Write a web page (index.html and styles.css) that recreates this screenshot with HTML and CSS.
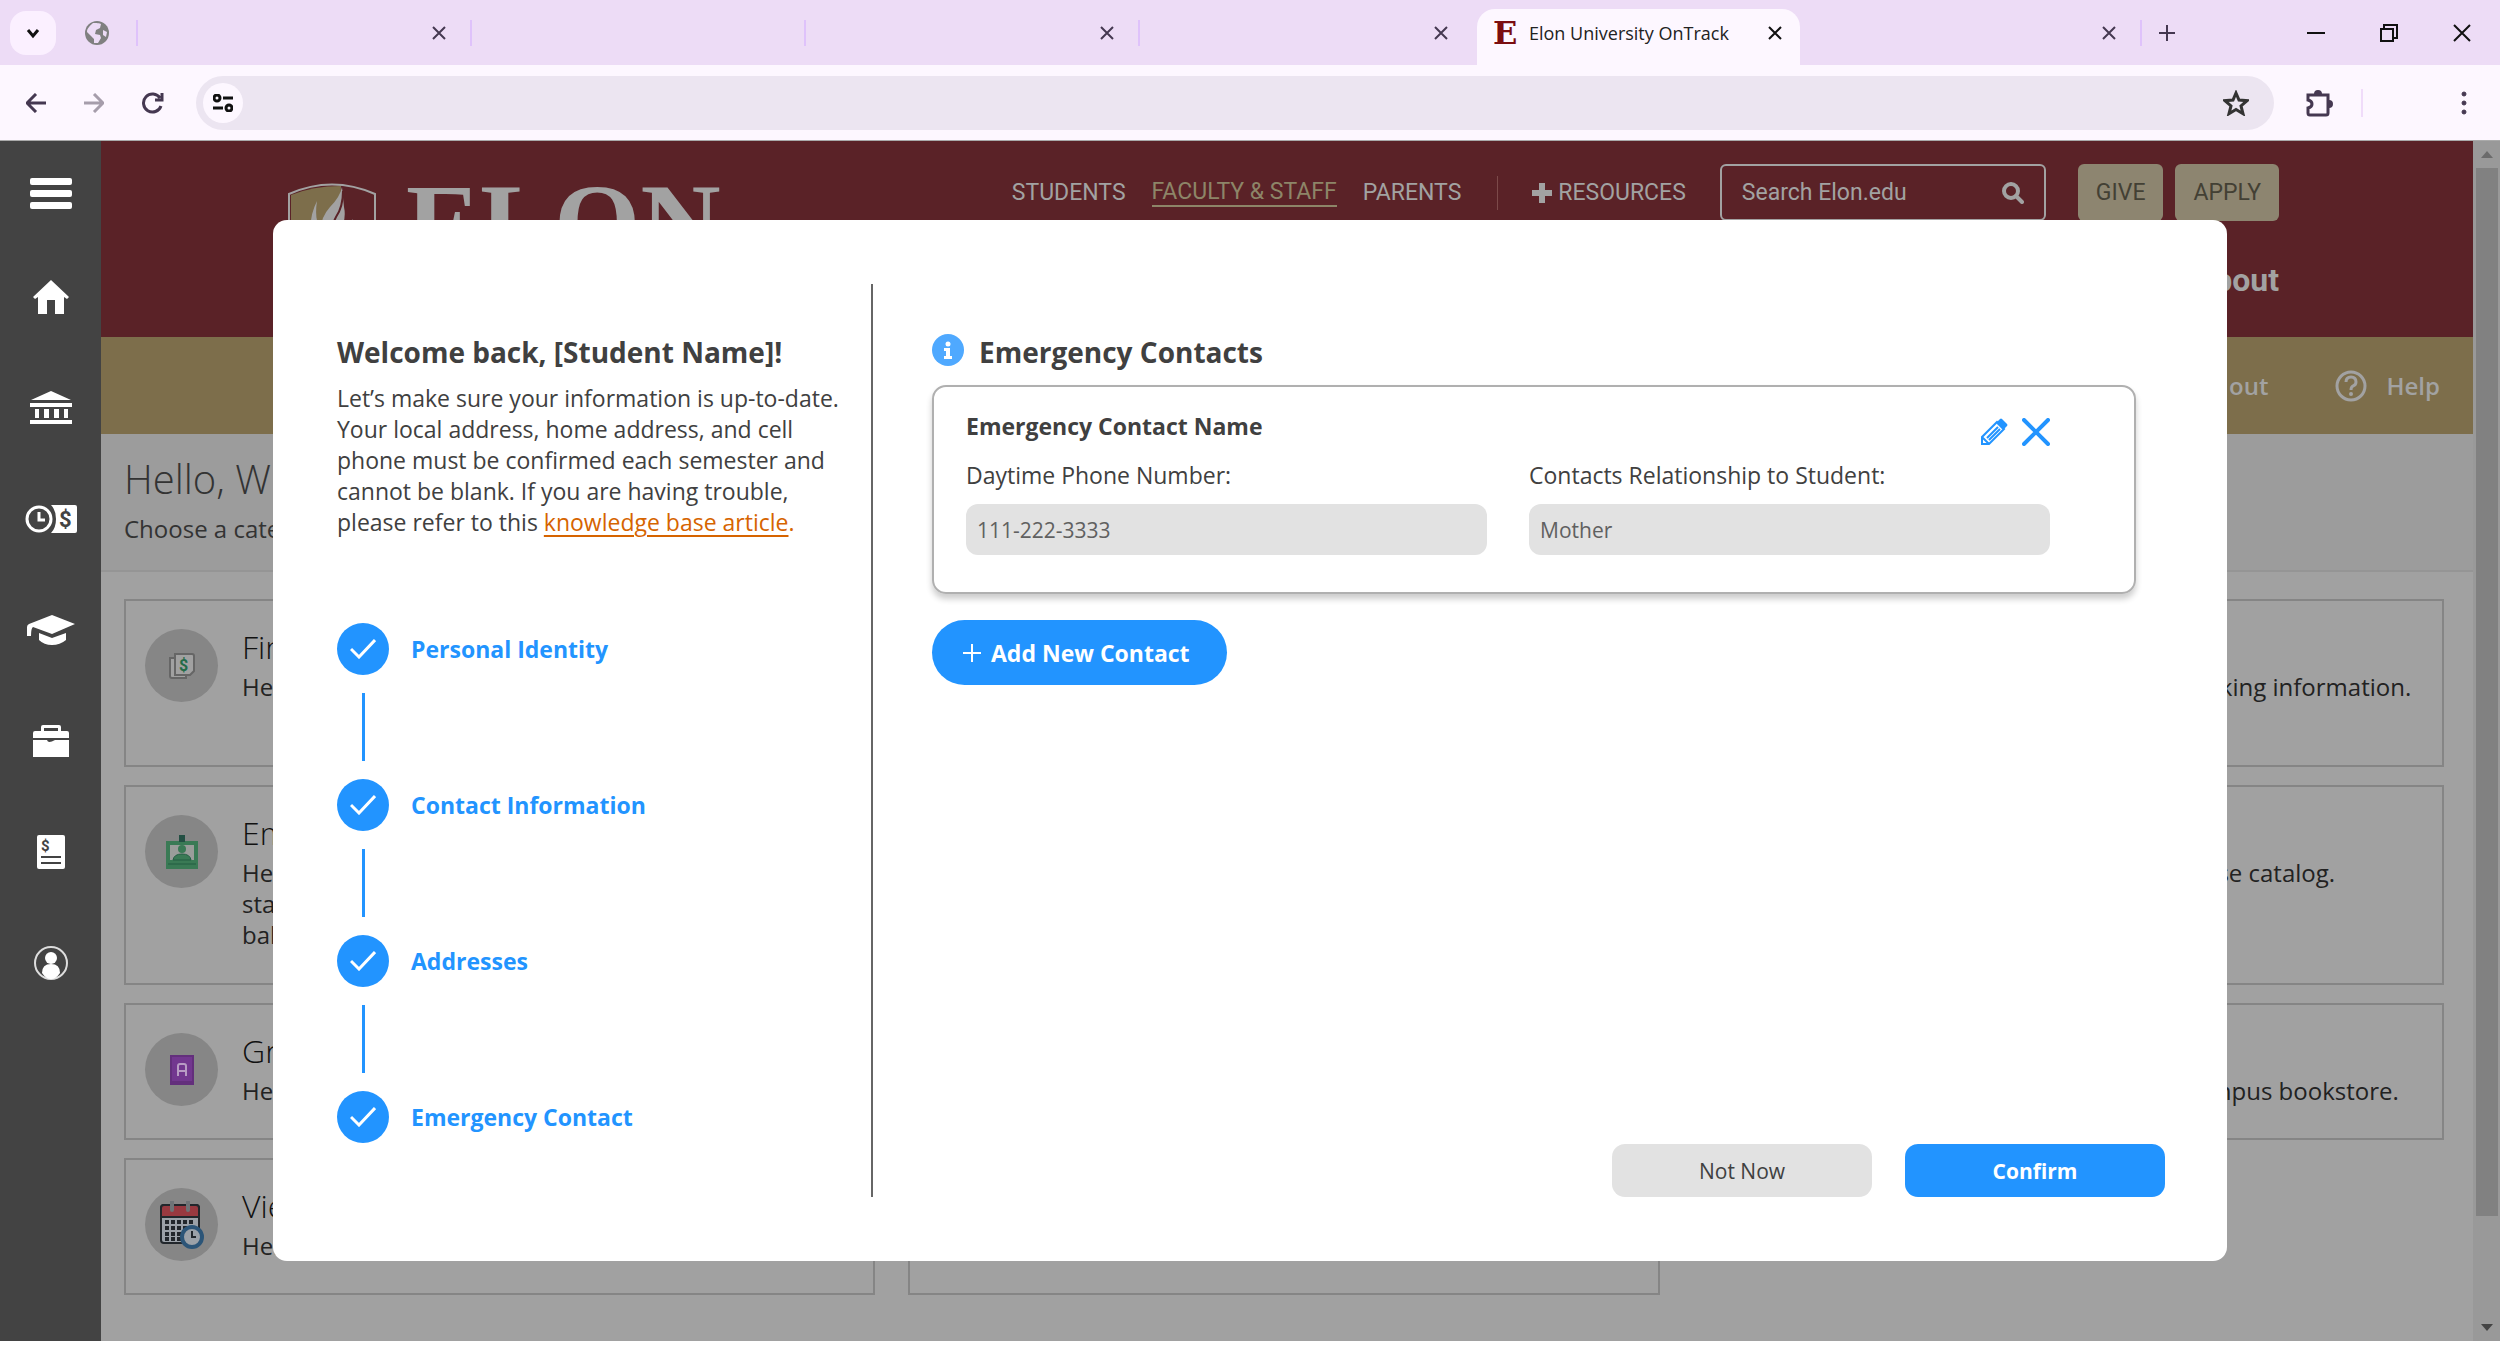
FILE: index.html
```html
<!DOCTYPE html>
<html lang="en">
<head>
    <meta charset="UTF-8">
    <meta name="viewport" content="width=device-width, initial-scale=1.0">
    <title>Elon University OnTrack</title>
    <link rel="stylesheet" href="styles.css">
</head>
<body>
    <!-- tab strip -->
    <div class="tabstrip">
        <div class="tabstrip-start">
            <button class="tab-search" aria-label="Search tabs"><svg width="16" height="16" viewBox="0 0 16 16"><path d="M3 5l5 6 5-6" fill="none" stroke="#111" stroke-width="3"/></svg></button>
            <svg width="24" height="24" viewBox="0 0 24 24"><circle cx="12" cy="12" r="12" fill="#808080"/><path d="M8 2c3 0 7 0 8 1l-1 4-4 2-1 4 5 1 1 3-3 5-4 0v-4l-3-3-4-4c0-4 3-6 6-9zM18 9l4 2-1 5-3-2z" fill="#eddcf6"/></svg>
        </div>
        <div class="tabs">
            <div class="tab"><button class="icon-btn" aria-label="Close tab"><svg width="14" height="14" viewBox="0 0 14 14"><path d="M1 1l12 12M13 1L1 13"/></svg></button></div>
            <div class="tab"></div>
            <div class="tab"><button class="icon-btn" aria-label="Close tab"><svg width="14" height="14" viewBox="0 0 14 14"><path d="M1 1l12 12M13 1L1 13"/></svg></button></div>
            <div class="tab"><button class="icon-btn" aria-label="Close tab"><svg width="14" height="14" viewBox="0 0 14 14"><path d="M1 1l12 12M13 1L1 13"/></svg></button></div>
            <div class="tab active">
                <span class="favicon">E</span>
                <span class="tab-title">Elon University OnTrack</span>
                <button class="icon-btn" aria-label="Close tab"><svg width="14" height="14" viewBox="0 0 14 14"><path d="M1 1l12 12M13 1L1 13"/></svg></button>
            </div>
            <div class="tab after-active"><button class="icon-btn" aria-label="Close tab"><svg width="14" height="14" viewBox="0 0 14 14"><path d="M1 1l12 12M13 1L1 13"/></svg></button></div>
        </div>
        <div class="tabstrip-end">
            <button class="icon-btn" aria-label="New tab"><svg width="18" height="18" viewBox="0 0 18 18"><path d="M9 1v16M1 9h16"/></svg></button>
            <div class="window-controls">
                <button class="icon-btn" aria-label="Minimize"><svg width="18" height="18" viewBox="0 0 18 18"><path d="M0 9h18"/></svg></button>
                <button class="icon-btn" aria-label="Restore"><svg width="18" height="18" viewBox="0 0 18 18"><path d="M1 5h12v12H1zM4 5V1h13v13h-4" /></svg></button>
                <button class="icon-btn" aria-label="Close window"><svg width="18" height="18" viewBox="0 0 18 18"><path d="M1 1l16 16M17 1L1 17"/></svg></button>
            </div>
        </div>
    </div>

    <!-- toolbar -->
    <div class="toolbar">
        <button class="icon-btn" aria-label="Back"><svg width="20" height="20" viewBox="0 0 20 20"><path d="M20 10H2M10 1l-9 9 9 9"/></svg></button>
        <button class="icon-btn faded" aria-label="Forward"><svg width="20" height="20" viewBox="0 0 20 20"><path d="M0 10h18M10 1l9 9-9 9"/></svg></button>
        <button class="icon-btn" aria-label="Reload"><svg width="22" height="22" viewBox="0 0 22 22"><path d="M19 14a9 9 0 1 1-1-8M20 1v7h-7"/></svg></button>
        <div class="address">
            <button class="site-info" aria-label="Site information"><svg width="20" height="18" viewBox="0 0 20 18"><circle cx="4" cy="4" r="3"/><path d="M10 4h10M0 14h10"/><circle cx="16" cy="14" r="3"/></svg></button>
            <input type="text" aria-label="Address">
            <button class="icon-btn" aria-label="Bookmark"><svg width="26" height="26" viewBox="0 0 26 26"><path d="M13 3l3 7 8 .7-6 5.300 2 7.700-7-4.200-7 4.200 2-7.700-6-5.300 8-.7z"/></svg></button>
        </div>
        <button class="icon-btn puzzle" aria-label="Extensions"><svg width="28" height="28" viewBox="0 0 28 28"><path d="M3 6h20v18q0 2-2 2H5q-2 0-2-2v-5q4-1 4-4t-4-4z"/><path d="M9 5a4 4 0 0 1 8 0zM24 11a4 4 0 0 1 0 8z" fill="#453851" stroke="none"/></svg></button>
        <button class="icon-btn dots" aria-label="Menu"><svg width="6" height="24" viewBox="0 0 6 24"><circle cx="3" cy="3" r="2"/><circle cx="3" cy="12" r="2"/><circle cx="3" cy="21" r="2"/></svg></button>
    </div>

    <div class="page">
        <nav class="sidebar" aria-label="Main">
            <a href="#" aria-label="Menu"><svg width="42" height="32" viewBox="0 0 42 32"><rect y="1" width="42" height="7" rx="2"/><rect y="13" width="42" height="7" rx="2"/><rect y="25" width="42" height="7" rx="2"/></svg></a>
            <a href="#" aria-label="Home"><svg width="36" height="34" viewBox="0 0 36 34"><path d="M18 0l18 17-2 2-3-2v17H22V20h-8v14H5V17l-3 2-2-2z"/></svg></a>
            <a href="#" aria-label="Finance"><svg width="42" height="34" viewBox="0 0 42 34"><path d="M21 0l20 9H1zM0 12h42v4H0zM5 18h4v9H5zM14 18h5v9h-5zM24 18h5v9h-5zM34 18h4v9h-4zM0 29h42v4H0z"/></svg></a>
            <a href="#" aria-label="Time and pay"><svg width="52" height="30" viewBox="0 0 52 30"><path d="M26 1h24q2 0 2 2v24q0 2-2 2H26q5-5 5-14T26 1z"/><circle cx="14" cy="15" r="12" fill="none" stroke="#fff" stroke-width="3"/><path d="M14 8v8h6" fill="none" stroke="#fff" stroke-width="3"/><text x="34" y="23" class="glyph" fill="#434343">$</text></svg></a>
            <a href="#" aria-label="Academics"><svg width="48" height="30" viewBox="0 0 48 30"><path d="M25 0l23 9-23 10L6 12q-2 1-2 9H0v-9q0-2 2-3zM12 18l13 5 14-5v7q-6 5-14 5t-13-5z"/></svg></a>
            <a href="#" aria-label="Employment"><svg width="36" height="32" viewBox="0 0 36 32"><path d="M8 6V2q0-2 2-2h16q2 0 2 2v4h6q2 0 2 2v5H0V8q0-2 2-2zM11 3v3h14V3zM0 15h14q1 4 8 0h14v17H0z" fill-rule="evenodd"/></svg></a>
            <a href="#" aria-label="Billing"><svg width="28" height="34" viewBox="0 0 28 34"><path d="M2 0h24q2 0 2 2v30q0 2-2 2H2q-2 0-2-2V2q0-2 2-2z"/><path d="M4 22h20M4 28h20" stroke="#434343" stroke-width="2"/><text x="4" y="16" class="glyph small" fill="#434343">$</text></svg></a>
            <a href="#" aria-label="Profile"><svg width="34" height="34" viewBox="0 0 34 34"><circle cx="17" cy="17" r="16" fill="none" stroke="#ddd" stroke-width="2"/><circle cx="17" cy="12" r="6"/><path d="M8 27q0-9 9-9t9 9q-4 6-9 6t-9-6z"/></svg></a>
        </nav>

        <main class="site">
            <header class="site-header">
                <div class="header-row">
                    <div class="logo">
                        <svg width="88" height="100" viewBox="0 0 88 100"><path d="M1 11Q44-8 87 11V98H1z" fill="#5a2227" stroke="#a2a2a2" stroke-width="2"/><path d="M3 12Q25 3 53 3L50 98H3z" fill="#7d6e4b"/><path d="M54 4q-2 10-12 20-9 10-9 22-7-8-4-28-8 16-6 32t14 48h16l14-52q-1 8-8 16 6-14 6-26-6 10-15 16 9-14 6-28-1-10-2-20z" fill="#a2a2a2"/><path d="M55 8q0 16-7 26-7 12-5 28" fill="none" stroke="#5a2227" stroke-width="2"/></svg>
                        <span>ELON</span>
                    </div>
                    <div class="top-nav">
                        <a href="#">STUDENTS</a>
                        <a href="#" class="current">FACULTY &amp; STAFF</a>
                        <a href="#">PARENTS</a>
                        <a href="#" class="resources"><svg width="20" height="20" viewBox="0 0 20 20"><path d="M7 0h6v7h7v6h-7v7H7v-7H0V7h7z" fill="#a2a2a2"/></svg>RESOURCES</a>
                        <div class="search">
                            <input type="text" placeholder="Search Elon.edu" aria-label="Search Elon.edu">
                            <svg width="22" height="22" viewBox="0 0 22 22"><circle cx="9" cy="9" r="7" fill="none" stroke="#a2a2a2" stroke-width="4"/><path d="M14 14l6 6" stroke="#a2a2a2" stroke-width="4" stroke-linecap="round"/></svg>
                        </div>
                        <a href="#" class="tan-btn">GIVE</a>
                        <a href="#" class="tan-btn">APPLY</a>
                    </div>
                </div>
                <a href="#" class="about">About</a>
            </header>
            <div class="gold-bar">
                <a href="#">Sign out</a>
                <a href="#" class="help"><svg width="32" height="32" viewBox="0 0 32 32"><circle cx="16" cy="16" r="14" fill="none" stroke="#a2a2a2" stroke-width="3"/><path d="M11 12q0-5 5-5t5 5q0 3-3 4-2 1-2 4" fill="none" stroke="#a2a2a2" stroke-width="3"/><circle cx="16" cy="24" r="2" fill="#a2a2a2"/></svg>Help</a>
            </div>
            <div class="greeting">
                <h1>Hello, William</h1>
                <p>Choose a category</p>
            </div>
            <div class="cards">
                <section class="card"><span class="round"><svg width="26" height="26" viewBox="0 0 26 26" fill="#a1a1a1" stroke="#666" stroke-width="2"><path d="M1 5h16v20H3q-2 0-2-2z"/><path d="M6 1h17q2 0 2 2v15l-4 4H6z"/><text x="10" y="18" class="glyph money" fill="#226b48" stroke="none">$</text></svg></span><div><h2>Financial</h2><p>Here you can view.</p></div></section>
                <section class="card"></section>
                <section class="card"><div class="wide"><p>Here you can view and edit your banking information.</p></div></section>
                <section class="card"><span class="round"><svg width="32" height="34" viewBox="0 0 32 34"><path d="M0 6h32v28H0z" fill="#3a7a55"/><path d="M4 10h24v15H4z" fill="#9a9d9a"/><path d="M13 0h6v7h-6z" fill="#234f43"/><circle cx="16" cy="14" r="4" fill="#3a7a55"/><path d="M7 25q1-6 9-6t9 6zM2 29h28" fill="#3a7a55" stroke="#235d43"/></svg></span><div><h2>Employee</h2><p>Here you can see<br>statements<br>balances</p></div></section>
                <section class="card"></section>
                <section class="card"><div class="wide"><p>Here you can open and use the course catalog.</p></div></section>
                <section class="card"><span class="round"><svg width="24" height="30" viewBox="0 0 24 30"><path d="M0 0h24v30H0z" fill="#632f7c"/><path d="M2 2h20v24H2z" fill="#72378f"/><path d="M8 21V11q0-2 2-2h4q2 0 2 2v10M8 16h8" fill="none" stroke="#b89cc4" stroke-width="2"/></svg></span><div><h2>Grades</h2><p>Here you can</p></div></section>
                <section class="card"></section>
                <section class="card"><div class="wide"><p>Here you can get books from the campus bookstore.</p></div></section>
                <section class="card"><span class="round"><svg width="46" height="48" viewBox="0 0 46 48"><rect x="2" y="4" width="38" height="38" rx="3" fill="#9ba1a8" stroke="#22272c" stroke-width="2"/><path d="M2 7q0-3 3-3h32q3 0 3 3v9H2z" fill="#983940" stroke="#22272c" stroke-width="2"/><path d="M13 1v8M29 1v8" stroke="#6e7477" stroke-width="4" stroke-linecap="round"/><path d="M6 21h30M6 27h30M6 33h30M6 38h18" stroke="#22272c" stroke-width="4" stroke-dasharray="4 2"/><circle cx="33" cy="36" r="10" fill="#9ba1a8" stroke="#2c5578" stroke-width="4"/><path d="M33 30v6h4" fill="none" stroke="#22272c" stroke-width="2"/></svg></span><div><h2>View Calendar</h2><p>Here you can view the holidays</p></div></section>
                <section class="card"><span class="round"></span><div><h2>Housing</h2><p>Click here to pay fees for all housing.</p></div></section>
            </div>
        </main>
        <div class="scrollbar"><span class="arrow up"></span><span class="thumb"></span><span class="arrow down"></span></div>
    </div>

    <!-- confirm information dialog -->
    <div class="overlay">
        <div class="modal" role="dialog" aria-label="Confirm your information">
            <div class="modal-left">
                <h2>Welcome back, [Student Name]!</h2>
                <p>Let’s make sure your information is up-to-date.<br>Your local address, home address, and cell<br>phone must be confirmed each semester and<br>cannot be blank. If you are having trouble,<br>please refer to this <a href="#">knowledge base article</a><span class="dot">.</span></p>
                <ol class="steps">
                    <li><span class="check"><svg width="26" height="20" viewBox="0 0 26 20"><path d="M1 10l8 8L25 1"/></svg></span>Personal Identity</li>
                    <li><span class="check"><svg width="26" height="20" viewBox="0 0 26 20"><path d="M1 10l8 8L25 1"/></svg></span>Contact Information</li>
                    <li><span class="check"><svg width="26" height="20" viewBox="0 0 26 20"><path d="M1 10l8 8L25 1"/></svg></span>Addresses</li>
                    <li><span class="check"><svg width="26" height="20" viewBox="0 0 26 20"><path d="M1 10l8 8L25 1"/></svg></span>Emergency Contact</li>
                </ol>
            </div>
            <form class="modal-right">
                <div class="section-title">
                    <svg width="32" height="32" viewBox="0 0 32 32"><circle cx="16" cy="16" r="16" fill="#4fa9ff"/><circle cx="16" cy="10" r="2.500" fill="#fff"/><path d="M12 14h6v8h2v3h-8v-3h2v-5h-2z" fill="#fff"/></svg>
                    <h2>Emergency Contacts</h2>
                </div>
                <div class="contact">
                    <div class="contact-head">
                        <h3>Emergency Contact Name</h3>
                        <div class="contact-actions">
                            <button type="button" aria-label="Edit contact"><svg width="28" height="28" viewBox="0 0 28 28"><path d="M2 26v-7L17 4l7 7L9 26zM2 19l7 7M7 20L18 9M9 22L20 11" fill="none" stroke="#2294ff" stroke-width="2"/><path d="M16 5l4-4q1-1 2 0l5 5q1 1 0 2l-4 4z" fill="#2294ff"/></svg></button>
                            <button type="button" aria-label="Remove contact"><svg width="28" height="28" viewBox="0 0 28 28"><path d="M2 2l24 24M26 2L2 26" stroke="#2294ff" stroke-width="4" stroke-linecap="round"/></svg></button>
                        </div>
                    </div>
                    <div class="fields">
                        <div class="field">
                            <label for="phone">Daytime Phone Number:</label>
                            <input type="text" id="phone" value="111-222-3333">
                        </div>
                        <div class="field">
                            <label for="relation">Contacts Relationship to Student:</label>
                            <input type="text" id="relation" value="Mother">
                        </div>
                    </div>
                </div>
                <button type="button" class="add-btn"><svg width="18" height="18" viewBox="0 0 18 18"><path d="M9 0v18M0 9h18" stroke="#fff" stroke-width="2"/></svg>Add New Contact</button>
                <div class="modal-actions">
                    <button type="button" class="btn">Not Now</button>
                    <button type="submit" class="btn primary">Confirm</button>
                </div>
            </form>
        </div>
    </div>
</body>
</html>
```

FILE: styles.css
```css
* { box-sizing: border-box; }
body { margin: 0; height: 100vh; display: flex; flex-direction: column; overflow: hidden; background-color: #fff; color: #404040; font-family: "Open Sans", "Noto Sans", sans-serif; font-size: 23px; }
h1, h2, h3, p { margin: 0; }
button { border: none; background: none; padding: 0; font: inherit; cursor: pointer; }
a { color: inherit; text-decoration: none; }
svg { display: block; flex: none; }

/* browser frame */
.icon-btn svg { fill: none; stroke: #453851; stroke-width: 2; }
.tabstrip { display: flex; height: 65px; background-color: #eddcf6; }
.tabstrip-start { width: 136px; display: flex; align-items: center; gap: 29px; padding-left: 10px; }
.tab-search { width: 46px; height: 44px; border-radius: 16px; background-color: #fbf0ff; display: flex; align-items: center; justify-content: center; }
.tabs { flex: 1; display: grid; grid-template-columns: repeat(6, minmax(0, 1fr)); }
.tab { display: flex; align-items: center; justify-content: flex-end; padding-right: 24px; position: relative; }
.tab::before { content: ""; position: absolute; left: 0; top: 20px; height: 26px; width: 2px; background-color: #dfc2fb; }
.tab.active { justify-content: flex-start; gap: 12px; margin: 9px 6px 0 5px; padding: 0 18px 9px 16px; border-radius: 18px 18px 0 0; background-color: #fdf7ff; color: #222; font-size: 18px; }
.tab.active::before, .tab.after-active::before { display: none; }
.tab.active svg { stroke: #111; }
.tab-title { flex: 1; white-space: nowrap; }
.favicon { width: 24px; text-align: center; font: bold 32px "DejaVu Serif", serif; line-height: 36px; color: #7b0d10; }
.tabstrip-end { width: 360px; display: flex; align-items: center; justify-content: space-between; padding: 0 29px 0 16px; border-left: 2px solid #dfc2fb; border-image: linear-gradient(transparent 20px, #dfc2fb 20px, #dfc2fb 46px, transparent 46px) 1; }
.window-controls { display: flex; gap: 55px; }
.window-controls svg { stroke: #111; }

.toolbar { display: flex; align-items: center; height: 76px; padding: 0 33px 0 26px; background-color: #fdf7ff; border-bottom: 1px solid #aaa; gap: 38px; }
.toolbar > .icon-btn svg { stroke-width: 3; }
.toolbar .faded svg { stroke: #a69dab; }
.address { flex: 1; display: flex; align-items: center; height: 54px; margin-left: -6px; padding: 0 25px 0 7px; border-radius: 27px; background-color: #ece5f1; }
.address input { flex: 1; border: none; background: none; outline: none; font: inherit; }
.site-info { width: 40px; height: 40px; border-radius: 50%; background-color: #fdf7ff; display: flex; align-items: center; justify-content: center; }
.site-info svg { fill: none; stroke: #111; stroke-width: 3; }
.address .icon-btn svg { stroke: #333; stroke-width: 3; }
.toolbar .puzzle { margin-left: -7px; padding-right: 28px; border-right: 2px solid #f0dcfa; }
.toolbar .dots { margin-left: 60px; }
.toolbar .dots svg { fill: #453851; stroke-width: 1; }

/* portal page behind the dialog */
.page { flex: 1; display: flex; min-height: 0; margin-bottom: 13px; background-color: #a1a1a1; }
.sidebar { width: 101px; padding-top: 4px; background-color: #434343; display: flex; flex-direction: column; align-items: center; }
.sidebar a { height: 111px; display: flex; align-items: center; }
.sidebar a:first-child { height: 96px; }
.sidebar svg { fill: #fff; }
.glyph { font: bold 22px Roboto, sans-serif; }
.glyph.small { font-size: 15px; }
.glyph.money { font-size: 16px; }
.site { flex: 1; min-width: 0; }
.site-header { height: 196px; padding: 23px 194px 0 187px; background-color: #5a2227; color: #a2a2a2; font-family: Roboto, sans-serif; }
.header-row { display: flex; justify-content: space-between; height: 92px; }
.logo { display: flex; gap: 30px; padding-top: 19px; font: bold 111px "Liberation Serif", serif; line-height: 80px; }
.top-nav { display: flex; align-items: center; height: 57px; font-size: 23px; }
.top-nav a { margin-right: 26px; }
.top-nav .current { color: #8d8568; border-bottom: 2px solid #8d8568; }
.top-nav .resources { display: flex; align-items: center; gap: 6px; margin: 0 34px 0 10px; padding-left: 34px; border-left: 1px solid #7c4a4a; line-height: 34px; }
.search { display: flex; align-items: center; width: 326px; height: 57px; margin-right: 32px; padding: 0 20px; border: 2px solid #a2a2a2; border-radius: 6px; }
.search input { flex: 1; min-width: 0; border: none; background: none; padding: 0; font: inherit; color: #a2a2a2; }
.search input::placeholder { color: #a2a2a2; opacity: 1; }
.top-nav .tan-btn { margin-right: 12px; padding: 0 18px; line-height: 57px; border-radius: 6px; background-color: #8d8570; color: #434034; }
.top-nav .tan-btn:last-child { margin-right: 0; }
.about { display: block; text-align: right; font-size: 32px; font-weight: 700; line-height: 48px; }
.gold-bar { height: 97px; display: flex; align-items: center; justify-content: flex-end; gap: 66px; padding-right: 33px; background-color: #7d6e4b; color: #a2a2a2; font-size: 24px; font-weight: 600; }
.help { display: flex; align-items: center; gap: 20px; }
.greeting { height: 138px; padding: 20px 23px; background-color: #9c9c9c; border-bottom: 2px solid #959595; color: #333; }
.greeting h1 { font-size: 40px; font-weight: 300; line-height: 50px; }
.greeting p { font-size: 24px; line-height: 50px; }
.cards { display: grid; grid-template-columns: repeat(3, 1fr); grid-template-rows: 168px 200px 137px 137px; gap: 18px 33px; padding: 27px 29px 0 23px; color: #222; }
.card { display: flex; gap: 24px; padding: 24px 19px; border: 2px solid #858585; font-size: 24px; line-height: 31px; white-space: nowrap; overflow: hidden; }
.card h2 { margin-bottom: 2px; color: #111; font-size: 32px; font-weight: 300; line-height: 44px; }
.card .wide { padding: 46px 0 0 98px; }
.round { flex: none; width: 73px; height: 73px; margin-top: 4px; border-radius: 50%; background-color: #868686; display: flex; align-items: center; justify-content: center; }
.scrollbar { width: 27px; background-color: #999; display: flex; flex-direction: column; align-items: center; padding: 10px 0; gap: 10px; }
.scrollbar .thumb { width: 22px; height: 1048px; margin-bottom: auto; background-color: #818181; }
.arrow { border: 6px solid transparent; }
.arrow.up { border-bottom: 7px solid #6b6b6b; border-top: 0; }
.arrow.down { border-top: 7px solid #444; border-bottom: 0; }

/* dialog */
.overlay { position: fixed; inset: 0; padding: 220px 273px 93px; display: flex; }
.modal { flex: 1; display: flex; padding: 64px 62px 64px 64px; border-radius: 14px; background-color: #fff; }
.modal h2 { font-size: 28px; font-weight: 700; line-height: 36px; }
.modal-left { width: 536px; padding-top: 50px; border-right: 2px solid #666; }
.modal-left p { margin-top: 13px; line-height: 31px; white-space: nowrap; }
.modal-left p a { color: #d66400; text-decoration: underline; text-underline-offset: 4px; }
.modal-left .dot { color: #d66400; }
.steps { list-style: none; margin: 85px 0 0; padding: 0; }
.steps li { position: relative; display: flex; align-items: center; gap: 22px; height: 52px; margin-bottom: 104px; color: #2294ff; font-weight: 700; }
.steps li:last-child { margin-bottom: 0; }
.steps li:not(:last-child)::after { content: ""; position: absolute; left: 25px; top: 70px; width: 3px; height: 68px; background-color: #2294ff; }
.check { width: 52px; height: 52px; border-radius: 50%; background-color: #2294ff; display: flex; align-items: center; justify-content: center; }
.check svg { fill: none; stroke: #fff; stroke-width: 3; }
.modal-right { flex: 1; display: flex; flex-direction: column; align-items: flex-start; padding: 50px 0 0 59px; }
.section-title { display: flex; gap: 15px; }
.contact { align-self: stretch; height: 209px; margin: 15px 29px 26px 0; padding: 20px 84px 0 32px; border: 2px solid #b0b0b0; border-radius: 14px; box-shadow: 0 5px 6px rgba(0,0,0,0.2); }
.contact-head { display: flex; justify-content: space-between; }
.contact h3 { font-size: 23px; line-height: 38px; }
.contact-actions { display: flex; gap: 14px; padding-top: 11px; }
.fields { display: flex; gap: 42px; margin-top: 13px; }
.field { flex: 1; display: flex; flex-direction: column; gap: 13px; }
.field label { line-height: 32px; }
.field input { width: 100%; height: 51px; padding: 0 11px; border: none; border-radius: 12px; background-color: #e2e2e2; color: #606060; font: inherit; font-size: 21px; }
.add-btn { display: flex; align-items: center; gap: 10px; height: 65px; padding: 0 37px 0 31px; border-radius: 33px; background-color: #2294ff; color: #fff; font-weight: 700; }
.modal-actions { align-self: flex-end; display: flex; gap: 33px; margin-top: auto; }
.btn { width: 260px; height: 53px; border-radius: 13px; background-color: #e2e2e2; color: #404040; font-size: 21px; }
.btn.primary { background-color: #2294ff; color: #fff; font-weight: 700; }
```
